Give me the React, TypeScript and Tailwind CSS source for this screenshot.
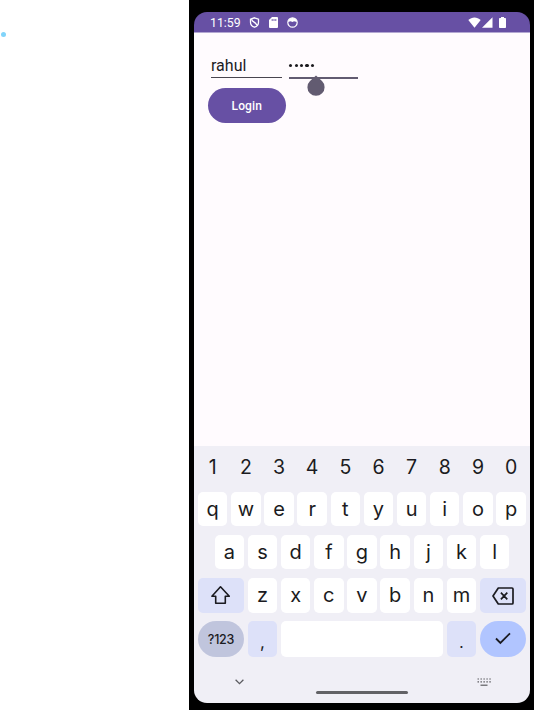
import React from "react";

function Key({ label, tone = "bg-white", text = "text-[20px]" }: { label: string; tone?: string; text?: string }) {
  return (
    <div
      className={`flex w-[29.4px] shrink-0 items-center justify-center rounded-[5px] font-['Inter',sans-serif] leading-none text-[#1b1b21] ${tone} ${text}`}
    >
      {label}
    </div>
  );
}

function StatusBar() {
  return (
    <div className="flex h-[20px] shrink-0 items-center bg-[#6750a4] pl-4 text-white">
      <span className="w-[39px] pt-[2px] text-[12.3px] leading-none">11:59</span>
      <svg className="mt-px h-[11px] w-[11px]" viewBox="0 0 10 11" fill="none" stroke="currentColor" strokeWidth="1.3">
        <path d="M5 .8 9 2.2V5.2C9 7.6 7.3 9.4 5 10.2 2.7 9.4 1 7.6 1 5.2V2.2ZM2.5 2.4C2 5 5.8 4.5 7.2 8" />
      </svg>
      <svg className="ml-[9px] mt-px h-[11px] w-[9px]" viewBox="0 0 9 11" fill="currentColor">
        <path d="M3 0H8Q9 0 9 1V10Q9 11 8 11H1Q0 11 0 10V3Z" />
        <path d="M3.2 2V4M5 2V4M6.8 2V4" stroke="#6750a4" strokeWidth=".9" />
      </svg>
      <svg className="ml-[9px] mt-px h-[11px] w-[11px]" viewBox="0 0 11 11">
        <circle cx="5.5" cy="5.5" r="4.7" fill="none" stroke="currentColor" strokeWidth="1.2" />
        <path d="M1 5C1.5 1.8 3 1 5.5 1S9.5 1.8 10 5L7 4.3 5.5 5 3.5 4.3Z" fill="currentColor" />
      </svg>
      <svg className="ml-auto h-[11px] w-[13px]" viewBox="0 0 13 11" fill="currentColor">
        <path d="M.3 3C4-.4 9-.4 12.7 3L6.5 10.7Z" />
      </svg>
      <svg className="ml-px h-[11px] w-[11px]" viewBox="0 0 11 11" fill="currentColor">
        <path d="M10.5.2V10.7H0Z" />
      </svg>
      <svg className="ml-[6px] mr-[24px] h-[11px] w-[7px]" viewBox="0 0 7 11" fill="currentColor">
        <path d="M2 0H5V1H6.2Q7 1 7 1.8V10.2Q7 11 6.2 11H.8Q0 11 0 10.2V1.8Q0 1 .8 1H2Z" />
      </svg>
    </div>
  );
}

function LoginForm() {
  return (
    <div className="flex-1 border-t border-[#b3a7d2] bg-[#fffbfe] pl-[14px] pt-[20px]">
      <div className="flex">
        <div className="ml-[3px] h-[25px] w-[71px] border-b border-[#49454f] pt-[3px] text-[16px] leading-[19px] text-[#1c1b1f]">
          rahul
        </div>
        <div className="relative ml-[7px] h-[26px] w-[69px] border-b-2 border-[#625b71]">
          <div className="flex gap-[2.3px] pl-[0.3px] pt-[11px]">
            {[0, 1, 2, 3, 4].map((i) => (
              <i key={i} className="h-[3.1px] w-[3.1px] rounded-full bg-[#1c1b1f]" />
            ))}
          </div>
          <svg className="absolute left-[18px] top-[22px] h-[21px] w-[18px]" viewBox="0 0 18 21" fill="#625b71">
            <path d="M9 .5 15 6.1A8.6 8.6 0 1 1 3 6.1Z" />
          </svg>
        </div>
      </div>
      <div className="mt-[9px] flex h-[34.5px] w-[77.5px] items-center justify-center rounded-full bg-[#6750a4] pt-px text-[12px] font-medium tracking-[0.1px] text-white">
        Login
      </div>
    </div>
  );
}

function Keyboard() {
  return (
    <div className="flex h-[257px] shrink-0 flex-col bg-[#f0eff6] px-1">
      <div className="flex h-[45.5px] gap-[3.77px]">
        {"1234567890".split("").map((c) => (
          <Key key={c} label={c} tone="bg-transparent" text="pb-[2px] text-[19.5px]" />
        ))}
      </div>
      <div className="flex h-[34.5px] gap-[3.77px]">
        {"qwertyuiop".split("").map((c) => (
          <Key key={c} label={c} />
        ))}
      </div>
      <div className="mt-[8.7px] flex h-[34.5px] justify-center gap-[3.77px]">
        {"asdfghjkl".split("").map((c) => (
          <Key key={c} label={c} />
        ))}
      </div>
      <div className="mt-[8.6px] flex h-[35px] justify-between">
        <div className="flex w-[46px] items-center justify-center rounded-[5px] bg-[#dde1f9]">
          <svg className="h-[20px] w-[20px]" viewBox="0 0 20 20" fill="none" stroke="#1b1b21" strokeWidth="1.6">
            <path d="M9.5 1.8 18.3 11.2H14.3V18.2H4.7V11.2H.9Z" strokeLinejoin="round" />
          </svg>
        </div>
        {"zxcvbnm".split("").map((c) => (
          <Key key={c} label={c} />
        ))}
        <div className="flex w-[46px] items-center justify-center rounded-[5px] bg-[#dde1f9]">
          <svg className="mt-px h-[18px] w-[22px]" viewBox="0 0 22 18" fill="none" stroke="#1b1b21" strokeWidth="1.7" strokeLinejoin="round">
            <path d="M6.3 1H20Q21 1 21 2V16Q21 17 20 17H6.3L1 9ZM8.9 5.7 15.3 12.3M15.3 5.7 8.9 12.3" />
          </svg>
        </div>
      </div>
      <div className="mt-[8.2px] flex h-[36px] justify-between">
        <div className="flex w-[46px] items-center justify-center rounded-full bg-[#c0c5dd] pt-[2px] font-['Inter',sans-serif] text-[12.5px] font-medium tracking-[-0.25px] text-[#1b1b21]">
          ?123
        </div>
        <Key label="," tone="bg-[#dde1f9]" text="pt-[7px] text-[17px]" />
        <div className="w-[162px] rounded-[5px] bg-white" />
        <Key label="." tone="bg-[#dde1f9]" text="pt-[7px] text-[15px]" />
        <div className="flex w-[46px] items-center justify-center rounded-full bg-[#b1c5ff]">
          <svg className="h-[13px] w-[16px]" viewBox="0 0 16 13" fill="none" stroke="#1b1b21" strokeWidth="1.8">
            <path d="M1 6.5 5.4 11 15 1.3" />
          </svg>
        </div>
      </div>
      <div className="grid flex-1 grid-cols-3">
        <svg className="ml-[37px] mt-[22.5px] h-[6px] w-[9px]" viewBox="0 0 9 6" fill="none" stroke="#5d5d62" strokeWidth="1.3">
          <path d="M.6.8 4.5 4.7 8.4.8" />
        </svg>
        <div className="ml-[8.5px] mt-[34px] h-[3.5px] w-[92px] rounded-full bg-[#626266]" />
        <svg className="ml-[60.5px] mt-[21px] h-[8px] w-[14px]" viewBox="0 0 14 8" stroke="#5d5d62" strokeWidth="1.2">
          <path d="M.5 1H14M.5 3.8H14" strokeDasharray="1.5 1.45" />
          <path d="M3.5 7.2H10.5" />
        </svg>
      </div>
    </div>
  );
}

export default function App() {
  return (
    <div className="flex h-[710px] w-[534px] overflow-hidden bg-white font-['Roboto',sans-serif]">
      <div className="w-[189px] pt-[32px]">
        <div className="ml-[1px] h-[5px] w-[5px] rounded-full bg-[#81d4fa]" />
      </div>
      <div className="flex-1 bg-black pb-[7px] pl-[5px] pr-[4px] pt-[12px]">
        <div className="flex h-[691px] flex-col overflow-hidden rounded-[13px]">
          <StatusBar />
          <LoginForm />
          <Keyboard />
        </div>
      </div>
    </div>
  );
}
